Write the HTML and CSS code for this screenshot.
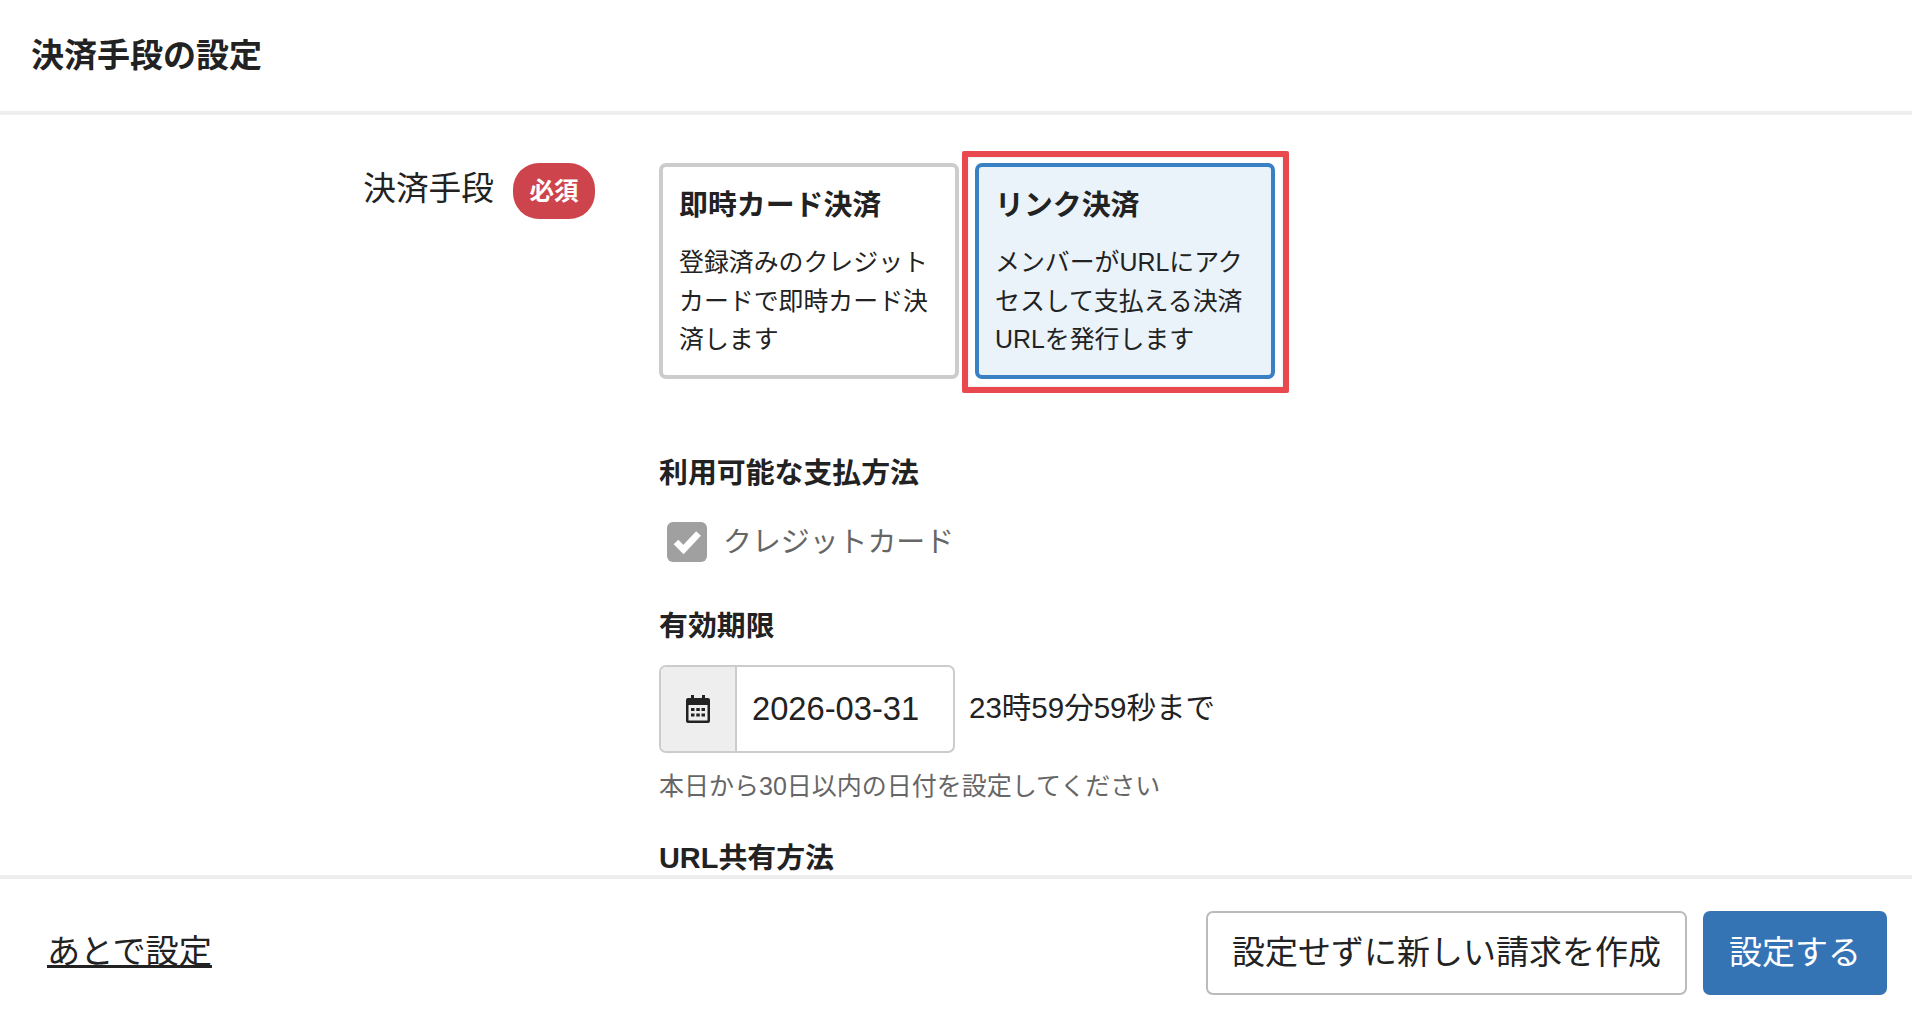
FILE: index.html
```html
<!DOCTYPE html>
<html lang="ja">
<head>
<meta charset="utf-8">
<title>決済手段の設定</title>
<link rel="stylesheet" href="styles.css">
</head>
<body>
<header class="page-header"><h1 class="page-title">決済手段の設定</h1></header>
<main class="content">
  <div class="label-col">
    <span class="field-label">決済手段</span>
    <span class="badge">必須</span>
  </div>
  <div class="form-col">
    <div class="cards">
      <div class="card">
        <div class="card-title">即時カード決済</div>
        <p class="card-text">登録済みのクレジットカードで即時カード決済します</p>
      </div>
      <div class="card card-selected">
        <div class="card-title">リンク決済</div>
        <p class="card-text">メンバーがURLにアクセスして支払える決済URLを発行します</p>
        <div class="highlight"></div>
      </div>
    </div>
    <h2 class="sub-title methods-title">利用可能な支払方法</h2>
    <div class="check-row">
      <span class="checkbox">
        <svg viewBox="0 0 40 40" width="40" height="40"><path d="M9 20l7.500 7.500 15-16" fill="none" stroke="#fff" stroke-width="6.500"/></svg>
      </span>
      <span class="check-label">クレジットカード</span>
    </div>
    <h2 class="sub-title expiry-title">有効期限</h2>
    <div class="date-row">
      <div class="date-input">
        <span class="date-addon">
          <svg viewBox="0 0 24 28" width="24" height="28">
            <path d="M5 0h3v4H5zM16 0h3v4h-3z" fill="#222"/>
            <path d="M2 3h20a2 2 0 0 1 2 2v21a2 2 0 0 1-2 2H2a2 2 0 0 1-2-2V5a2 2 0 0 1 2-2zM2.500 10v15.500h19V10z" fill="#222" fill-rule="evenodd"/>
            <path d="M5 13h3.500v3H5zM10.300 13h3.500v3h-3.500zM15.500 13H19v3h-3.500zM5 18.500h3.500v3H5zM10.300 18.500h3.500v3h-3.500zM15.500 18.500H19v3h-3.500z" fill="#222"/>
          </svg>
        </span>
        <span class="date-value">2026-03-31</span>
      </div>
      <span class="date-suffix">23時59分59秒まで</span>
    </div>
    <p class="help">本日から30日以内の日付を設定してください</p>
    <h2 class="sub-title share-title">URL共有方法</h2>
  </div>
</main>
<footer class="page-footer">
  <a class="later-link" href="#">あとで設定</a>
  <div class="actions">
    <button class="btn btn-outline" type="button">設定せずに新しい請求を作成</button>
    <button class="btn btn-primary" type="button">設定する</button>
  </div>
</footer>
</body>
</html>
```
FILE: styles.css
```css
* { box-sizing: border-box; }
html, body { height: 100%; }
body {
  margin: 0;
  height: 100vh;
  overflow: hidden;
  display: flex;
  flex-direction: column;
  background: #fff;
  color: #222;
  font-family: "Liberation Sans", "Noto Sans CJK JP", sans-serif;
}
.page-header {
  flex: none;
  height: 115px;
  padding: 0 0 5px 31px;
  display: flex;
  align-items: center;
  border-bottom: 4px solid #eee;
}
.page-title { margin: 0; font-size: 33px; font-weight: 700; }
.content {
  flex: 1;
  min-height: 0;
  overflow: hidden;
  display: flex;
  gap: 64px;
  padding-top: 48px;
}
.label-col {
  flex: none;
  width: 595px;
  height: 56px;
  display: flex;
  justify-content: flex-end;
  gap: 19px;
}
.field-label { font-size: 32.7px; line-height: 52px; }
.badge {
  width: 82px;
  height: 56px;
  padding-bottom: 4px;
  border-radius: 26px;
  background: #cd444d;
  color: #fff;
  font-size: 24.500px;
  font-weight: 700;
  display: flex;
  align-items: center;
  justify-content: center;
}
.form-col { flex: none; width: 700px; }
.cards { display: flex; gap: 16px; }
.card {
  position: relative;
  width: 300px;
  height: 216px;
  padding: 16px 15px 0 16px;
  border: 4px solid #ccc;
  border-radius: 7px;
  background: #fff;
}
.card-selected { border-color: #3a80c4; background: #eaf2fa; }
.card-title { font-size: 28.9px; font-weight: 700; line-height: 44px; }
.card-text { margin: 16px 0 0; font-size: 24.900px; line-height: 38.600px; }
.highlight {
  position: absolute;
  top: -16px;
  left: -17px;
  right: -18px;
  bottom: -18px;
  border: 6px solid #e9494e;
  border-radius: 2px;
  box-shadow: inset 0 0 3px rgba(0, 0, 0, 0.12);
}
.sub-title { margin: 0; font-size: 28.9px; font-weight: 700; line-height: 40px; }
.methods-title { margin-top: 74px; }
.check-row { display: flex; align-items: center; gap: 16px; height: 40px; margin-top: 29px; padding-left: 8px; }
.checkbox { width: 40px; height: 40px; border-radius: 6px; background: #a0a0a0; display: block; }
.checkbox svg { display: block; }
.check-label { padding-bottom: 1px; font-size: 28.9px; line-height: 34px; color: #666; }
.expiry-title { margin-top: 44px; }
.date-row { display: flex; align-items: center; gap: 14px; margin-top: 19px; }
.date-input {
  width: 296px;
  height: 88px;
  display: flex;
  border: 2px solid #ccc;
  border-radius: 7px;
  overflow: hidden;
}
.date-addon {
  flex: none;
  width: 76px;
  background: #eee;
  border-right: 2px solid #ccc;
  display: flex;
  align-items: center;
  justify-content: center;
}
.date-value { padding-left: 15px; font-size: 32.7px; line-height: 84px; }
.date-suffix { padding-bottom: 8px; font-size: 29.500px; }
.help { margin: 16px 0 0; font-size: 25px; line-height: 34px; color: #666; }
.share-title { margin-top: 35px; }
.page-footer {
  flex: none;
  height: 147px;
  padding: 32px 25px 0 47px;
  border-top: 4px solid #eee;
  background: #fff;
  display: flex;
  justify-content: space-between;
  align-items: flex-start;
}
.later-link {
  margin-top: 16px;
  font-size: 33.200px;
  line-height: 50px;
  color: #222;
  text-decoration-thickness: 3px;
}
.actions { display: flex; gap: 16px; }
.btn {
  height: 84px;
  padding: 0 0 7px;
  border-radius: 7px;
  font-family: inherit;
  font-size: 33px;
}
.btn-outline { width: 481px; border: 2px solid #bbb; background: #fff; color: #222; }
.btn-primary { width: 184px; border: 0; background: #3574b4; color: #fff; }
```
